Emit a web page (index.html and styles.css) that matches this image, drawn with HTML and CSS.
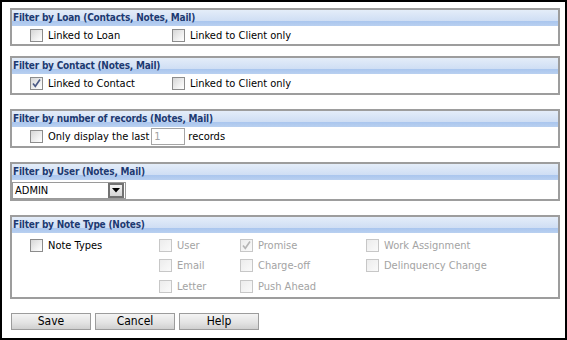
FILE: index.html
```html
<!DOCTYPE html>
<html lang="en">
<head>
    <meta charset="UTF-8">
    <title>Filters</title>
    <link rel="stylesheet" href="styles.css">
</head>
<body>
<div class="frame">
    <div class="section first">
        <div class="section-head">Filter by Loan (Contacts, Notes, Mail)</div>
        <div class="row">
            <label class="opt wide"><span class="box"></span>Linked to Loan</label>
            <label class="opt"><span class="box"></span>Linked to Client only</label>
        </div>
    </div>
    <div class="section">
        <div class="section-head">Filter by Contact (Notes, Mail)</div>
        <div class="row">
            <label class="opt wide"><span class="box checked"><svg width="11" height="11" viewBox="0 0 11 11"><path d="M2 5.5 L4.3 8.3 L9 1.5" fill="none" stroke="#4b5a85" stroke-width="1.6"/></svg></span>Linked to Contact</label>
            <label class="opt"><span class="box"></span>Linked to Client only</label>
        </div>
    </div>
    <div class="section">
        <div class="section-head">Filter by number of records (Notes, Mail)</div>
        <div class="row">
            <label class="opt"><span class="box"></span>Only display the last</label>
            <span class="count">1</span>
            <span class="after">records</span>
        </div>
    </div>
    <div class="section">
        <div class="section-head">Filter by User (Notes, Mail)</div>
        <div class="row row-select">
            <div class="select">
                <span>ADMIN</span>
                <span class="select-btn"><svg width="8" height="5" viewBox="0 0 8 5"><path d="M0 0 H8 L4 4.5 Z" fill="#000"/></svg></span>
            </div>
        </div>
    </div>
    <div class="section last">
        <div class="section-head">Filter by Note Type (Notes)</div>
        <div class="types">
            <label class="opt"><span class="box"></span>Note Types</label>
            <label class="opt off"><span class="box"></span>User</label>
            <label class="opt off"><span class="box checked"><svg width="11" height="11" viewBox="0 0 11 11"><path d="M2 5.5 L4.3 8.3 L9 1.5" fill="none" stroke="#b5b5b5" stroke-width="1.6"/></svg></span>Promise</label>
            <label class="opt off"><span class="box"></span>Work Assignment</label>
            <span></span>
            <label class="opt off"><span class="box"></span>Email</label>
            <label class="opt off"><span class="box"></span>Charge-off</label>
            <label class="opt off"><span class="box"></span>Delinquency Change</label>
            <span></span>
            <label class="opt off"><span class="box"></span>Letter</label>
            <label class="opt off"><span class="box"></span>Push Ahead</label>
        </div>
    </div>
    <div class="buttons">
        <button class="btn">Save</button>
        <button class="btn">Cancel</button>
        <button class="btn">Help</button>
    </div>
</div>
</body>
</html>
```

FILE: styles.css
```css
body {
    margin: 0;
    font-family: "DejaVu Sans Condensed", "Liberation Sans", sans-serif;
    font-size: 11px;
    color: #000;
}
.frame {
    width: 567px;
    height: 340px;
    box-sizing: border-box;
    border: 2px solid #000;
    background: #fff;
    padding: 6px 5px 0 8px;
    display: flex;
    flex-direction: column;
}
.section {
    border: 2px solid #9d9d9d;
    width: 546px;
    margin-bottom: 14px;
}
.section.first {
    margin-bottom: 10px;
}
.section.first .row {
    height: 18px;
}
.section.last {
    margin-bottom: 14px;
}
.section-head {
    height: 16px;
    line-height: 15px;
    padding-left: 1px;
    font-size: 10px;
    letter-spacing: -0.2px;
    font-weight: bold;
    color: #1d3a72;
    background: linear-gradient(#e4edf9, #cfdef4 68%, #aac6ee 70%, #b9d0f0);
}
.row {
    display: flex;
    align-items: center;
    height: 19px;
    padding-left: 18px;
}
.opt {
    display: flex;
    align-items: center;
}
.wide {
    width: 142px;
}
.box {
    width: 11px;
    height: 11px;
    border: 1px solid #8c8c8c;
    background: linear-gradient(135deg, #d6d6d6, #f4f4f4 70%, #fff);
    margin-right: 5px;
    display: flex;
    align-items: center;
    justify-content: center;
}
.off {
    color: #a3a3a3;
}
.off .box {
    border-color: #c7c7c7;
    background: linear-gradient(135deg, #ececec, #fafafa);
}
.count {
    width: 30px;
    height: 15px;
    border: 1px solid #a5a5a5;
    margin-left: 2px;
    padding-left: 2px;
    line-height: 15px;
    color: #a3a3a3;
}
.after {
    margin-left: 3px;
}
.row-select {
    padding-left: 0;
    align-items: flex-end;
}
.select {
    width: 110px;
    height: 15px;
    border: 1px solid #9a9a9a;
    display: flex;
    align-items: center;
    justify-content: space-between;
    padding-left: 2px;
}
.select-btn {
    width: 12px;
    height: 11px;
    border: 2px solid #727272;
    background: linear-gradient(#f2f2f2, #d6d6d6);
    margin-right: 1px;
    display: flex;
    align-items: center;
    justify-content: center;
}
.types {
    display: grid;
    grid-template-columns: 129px 81px 126px auto;
    grid-auto-rows: 20.5px;
    align-items: center;
    padding: 2px 0 0 18px;
}
.buttons {
    display: flex;
    gap: 4px;
    padding-left: 1px;
}
.btn {
    width: 80px;
    height: 17px;
    padding: 0;
    font: inherit;
    font-size: 12px;
    color: #000;
    border: 1px solid #9c9c9c;
    background: linear-gradient(#f4f4f4, #e2e2e2 60%, #cfcfcf);
}
```
